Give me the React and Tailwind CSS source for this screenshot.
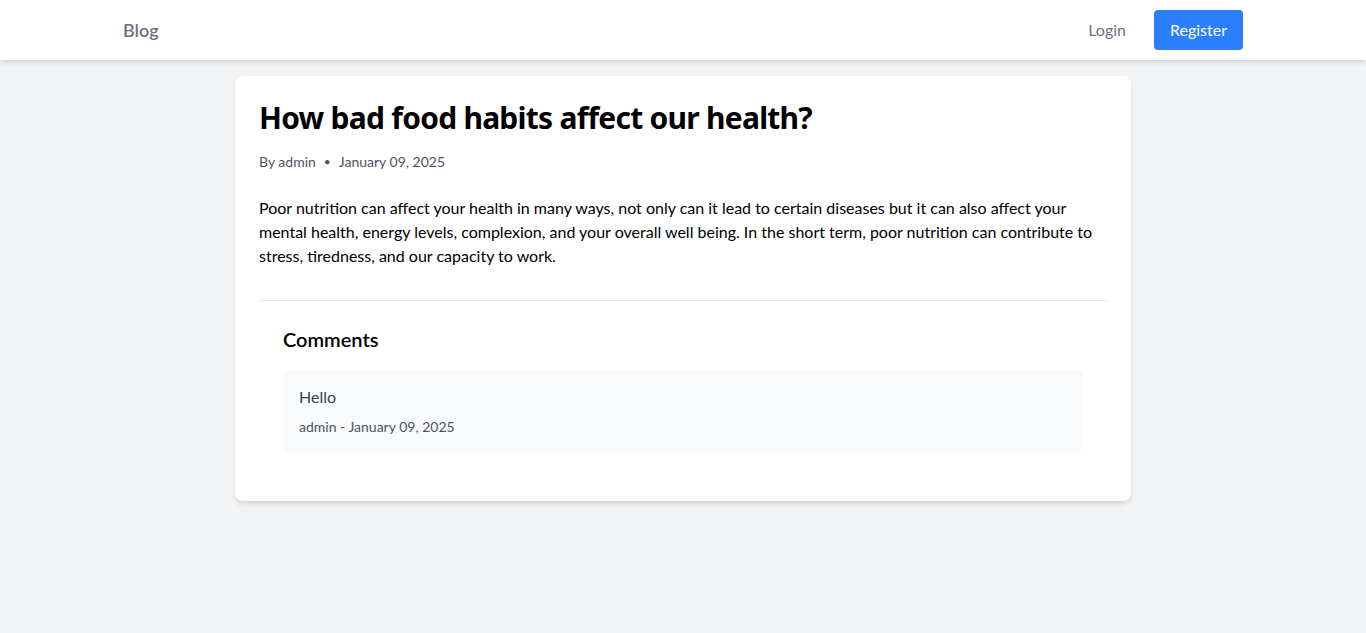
export default function App() {
  return (
    <div className="min-h-screen bg-gray-100 font-['Segoe_UI','Lato',sans-serif]">
      {/* Navbar */}
      <nav className="bg-white shadow-md">
        <div className="max-w-[1120px] mx-auto flex items-center justify-between py-2.5">
          <a href="#" className="text-lg font-semibold text-gray-500">
            Blog
          </a>
          <div className="flex items-center gap-7">
            <a href="#" className="text-gray-500">
              Login
            </a>
            <a href="#" className="bg-blue-500 text-white rounded px-4 py-2">
              Register
            </a>
          </div>
        </div>
      </nav>

      {/* Post */}
      <main className="max-w-4xl mx-auto pt-4">
        <article className="bg-white rounded-lg shadow-md p-6">
          <h1 className="text-3xl font-bold text-black mb-4 tracking-tight font-['Segoe_UI','Noto_Sans',sans-serif]">
            How bad food habits affect our health?
          </h1>
          <div className="flex items-center text-sm text-gray-600 mb-6">
            <span>By admin</span>
            <span className="mx-2 text-xs">•</span>
            <span>January 09, 2025</span>
          </div>
          <p className="text-black mb-8">
            Poor nutrition can affect your health in many ways, not only can it lead to certain diseases but it can also affect your mental health, energy levels, complexion, and your overall well being. In the short term, poor nutrition can contribute to stress, tiredness, and our capacity to work.
          </p>

          {/* Comments */}
          <section className="border-t border-gray-200 p-6">
            <h2 className="text-xl font-semibold text-black mb-4">Comments</h2>
            <div className="bg-gray-50 rounded-lg p-4">
              <p className="text-gray-700 mb-2">Hello</p>
              <p className="text-sm text-gray-600">admin - January 09, 2025</p>
            </div>
          </section>
        </article>
      </main>
    </div>
  );
}
